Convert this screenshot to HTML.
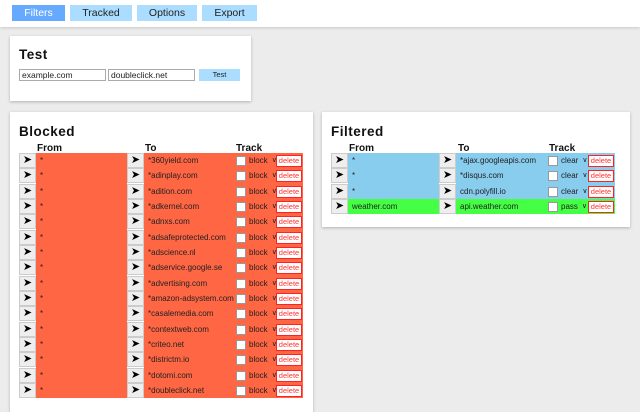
<!DOCTYPE html>
<html><head><style>
*{margin:0;padding:0;box-sizing:border-box}
body{width:640px;height:400px;overflow:hidden;background:#ececec;font-family:"Liberation Sans",Arial,sans-serif;position:relative}
.top{position:absolute;left:0;top:0;width:640px;height:27px;background:#fff;box-shadow:0 1px 3px rgba(0,0,0,.15)}
.tb{position:absolute;top:5px;height:16px;background:#aaddff;font-size:10.5px;text-align:center;line-height:16px;color:#222}
.card{position:absolute;background:#fff;box-shadow:0 1px 3px rgba(0,0,0,.25)}
h2{position:absolute;font-size:13.5px;font-weight:bold;letter-spacing:.5px;color:#111}
.inp{position:absolute;top:69px;height:12px;border:1px solid #aaa;font-size:8.5px;line-height:10px;padding-left:2px;color:#222}
.hd{position:absolute;top:143px;font-size:10px;font-weight:bold;color:#111}
.row{position:absolute;height:15.33px;display:flex}
.ar{width:17px;height:15px;background:#eee;border:1px solid #ccc;font-size:11px;line-height:13px;text-align:center;color:#000}
.c{width:91px;height:15.33px;font-size:8px;line-height:16px;padding-left:4px;color:#222;white-space:nowrap;overflow:hidden}
.tr{position:relative;height:15.33px}
.cb{position:absolute;left:1px;top:3px;width:10px;height:10px;background:#fff;border:1px solid #999}
.sel{position:absolute;left:14px;top:0;font-size:8px;line-height:16px;color:#222}
.sel span{font-size:7px;position:relative;top:-1px;margin-left:4px}
.dl{position:absolute;top:2px;width:26px;height:12px;background:#fff;border:1px solid #f22;color:#f33;font-size:7.5px;line-height:10px;text-align:center}
</style></head><body>
<div class="top">
<div class="tb" style="left:12px;width:53px;background:#66aaff;color:#fff">Filters</div>
<div class="tb" style="left:70px;width:62px">Tracked</div>
<div class="tb" style="left:137px;width:60px">Options</div>
<div class="tb" style="left:202px;width:55px">Export</div>
</div>

<div class="card" style="left:10px;top:36px;width:241px;height:65px"></div>
<h2 style="left:19px;top:47px">Test</h2>
<div class="inp" style="left:19px;width:87px">example.com</div>
<div class="inp" style="left:108px;width:87px">doubleclick.net</div>
<div style="position:absolute;left:199px;top:69px;width:41px;height:12px;background:#aaddff;font-size:7.5px;line-height:12px;text-align:center;color:#222">Test</div>

<div class="card" style="left:10px;top:112px;width:303px;height:300px"></div>
<h2 style="left:19px;top:124px">Blocked</h2>
<div class="hd" style="left:37px">From</div><div class="hd" style="left:145px">To</div><div class="hd" style="left:236px">Track</div>

<div class="card" style="left:322px;top:112px;width:308px;height:115px"></div>
<h2 style="left:331px;top:124px">Filtered</h2>
<div class="hd" style="left:349px">From</div><div class="hd" style="left:458px">To</div><div class="hd" style="left:549px">Track</div>

<div id="b"></div>
<script>
var bl=["360yield.com","adinplay.com","adition.com","adkernel.com","adnxs.com","adsafeprotected.com","adscience.nl","adservice.google.se","advertising.com","amazon-adsystem.com","casalemedia.com","contextweb.com","criteo.net","districtm.io","dotomi.com","doubleclick.net"];
var h="";
function row(x,y,from,to,bg,sel,tw){return '<div class="row" style="left:'+x+'px;top:'+y+'px"><div class="ar">&#10148;</div><div class="c" style="background:'+bg+'">'+from+'</div><div class="ar">&#10148;</div><div class="c" style="background:'+bg+'">'+to+'</div><div class="tr" style="width:'+tw+'px;background:'+bg+'"><div class="cb"></div><div class="sel">'+sel+'<span>&#8744;</span></div><div class="dl" style="left:'+(tw-27)+'px">delete</div></div></div>';}
for(var i=0;i<bl.length;i++)h+=row(19,153+i*15.33,"*","*"+bl[i],"#ff6644","block",68);
var fl=[["*","*ajax.googleapis.com","#88ccee","clear"],["*","*disqus.com","#88ccee","clear"],["*","cdn.polyfill.io","#88ccee","clear"],["weather.com","api.weather.com","#44ff44","pass"]];
for(var i=0;i<fl.length;i++)h+=row(331,153+i*15.33,fl[i][0],fl[i][1],fl[i][2],fl[i][3],68);
document.getElementById("b").innerHTML=h;
</script>
</body></html>
